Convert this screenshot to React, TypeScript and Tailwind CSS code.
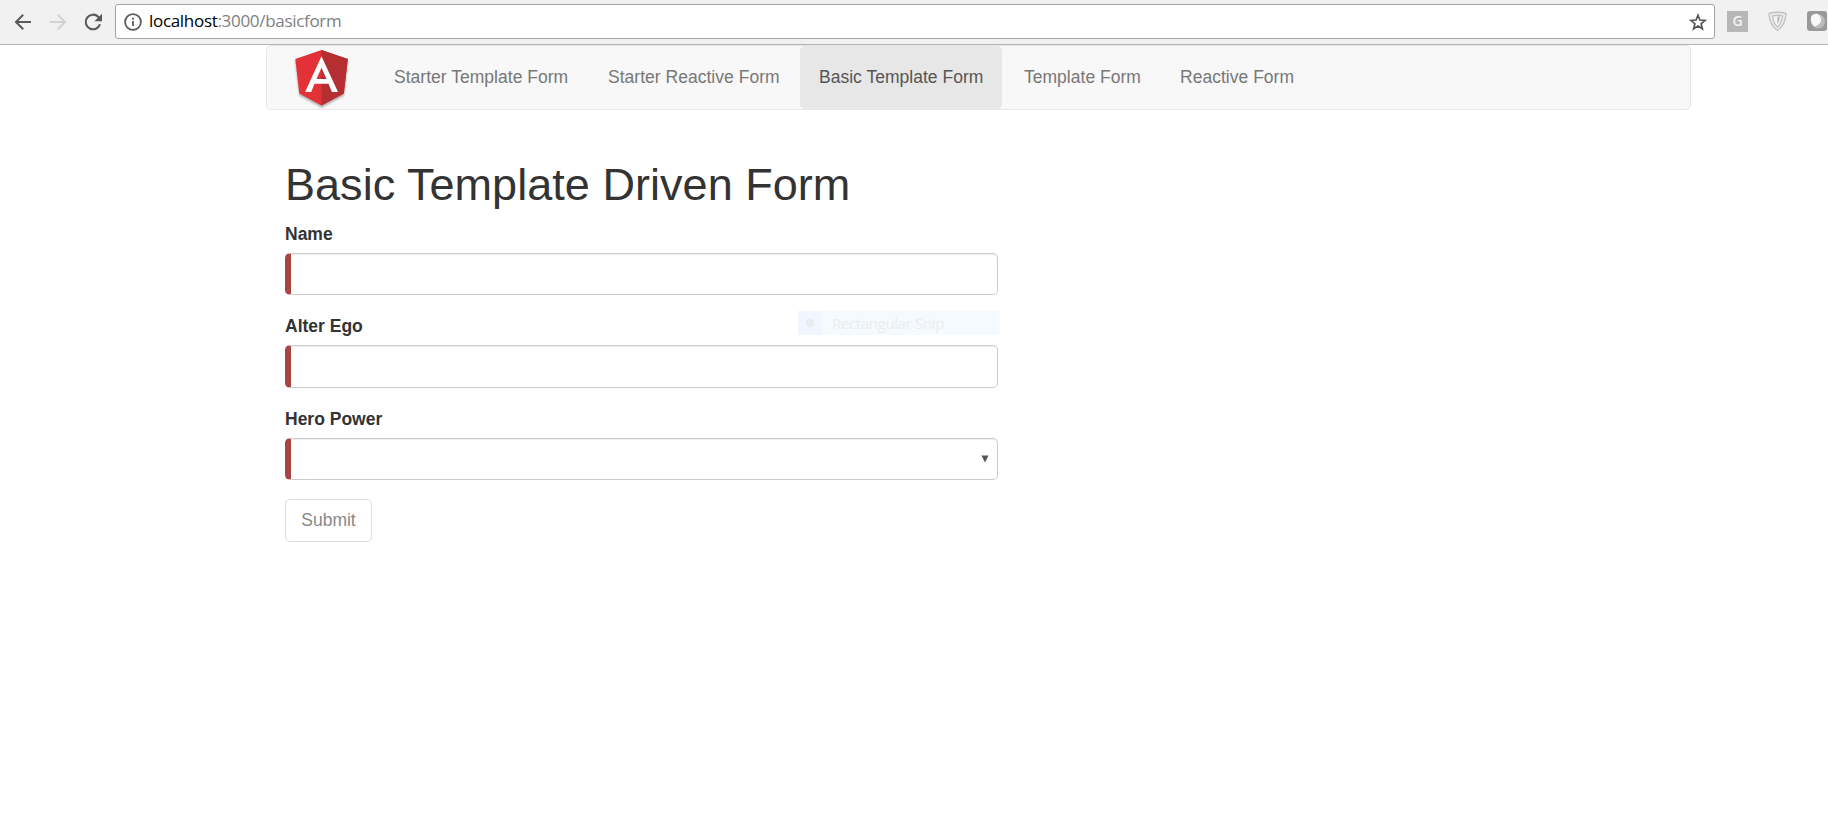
import React from 'react';

function Toolbar() {
  return (
    <header className="flex h-[45px] items-start overflow-hidden border-b border-[#b3b3b3] bg-[#f1f1f1]">
      <svg className="mt-[11px] ml-[12px] size-[22px] shrink-0" viewBox="0 0 22 22" fill="none" stroke="#5a5a5a" strokeWidth="2">
        <path d="M19 11H4.5M11.2 3.8 4 11l7.2 7.2" />
      </svg>
      <svg className="mt-[11px] ml-[13px] size-[22px] shrink-0" viewBox="0 0 22 22" fill="none" stroke="#d2d2d2" strokeWidth="2">
        <path d="M3 11h14.5M10.8 3.8 18 11l-7.2 7.2" />
      </svg>
      <svg className="mt-[11px] ml-[13px] size-[22px] shrink-0" viewBox="0 0 22 22" fill="none" stroke="#5a5a5a" strokeWidth="2.1">
        <path d="M18 13.2A7.3 7.3 0 1 1 16.2 5.8l1.2 1.2" />
        <path d="M20 2.8v7.4h-7.6z" fill="#5a5a5a" stroke="none" />
      </svg>
      <div className="mt-[4px] ml-[11px] flex h-[35px] w-[1600px] shrink-0 items-center rounded-[3px] border border-[#a3a3a3] bg-white pr-[7px] pl-[8px]">
        <svg className="size-[18px]" viewBox="0 0 18 18" fill="none" stroke="#5a5a5a" strokeWidth="1.8">
          <circle cx="9" cy="9" r="7.9" />
          <path d="M9 8v5M9 4.8v1.9" />
        </svg>
        <span className="mt-[-1px] ml-[7px] flex-1 font-['Open_Sans',sans-serif] text-[17px] leading-[24px] tracking-[-0.31px] whitespace-nowrap text-[#808080]">
          <span className="text-black">localhost</span>:3000/basicform
        </span>
        <svg className="size-[18px]" viewBox="0 0 18 18" fill="none" stroke="#555" strokeWidth="1.7">
          <path d="m9 2.2 1.9 4.8 5.2.4-4 3.3 1.3 5.1L9 13l-4.4 2.8 1.3-5.1-4-3.3 5.2-.4z" />
        </svg>
      </div>
      <svg className="mt-[11px] ml-[12px] h-[21px] w-[21px] shrink-0" viewBox="0 0 21 21">
        <path d="M0 0h21v21H0z" fill="#b7b7b7" />
        <text x="10.5" y="15.4" textAnchor="middle" fontFamily="Open Sans, sans-serif" fontSize="14" fontWeight="600" fill="#f4f4f4">G</text>
      </svg>
      <svg className="mt-[11px] ml-[20px] h-[21px] w-[19px] shrink-0" viewBox="0 0 19 21" fill="none" stroke="#c2c2c2" strokeWidth="1.4">
        <path d="M1 2.5Q9.5 0 18 2.5 17.500 14 9.500 19.500 1.500 14 1 2.500Z" fill="#ededed" />
        <path d="M4.500 5Q9.500 3.500 14.500 5q-.5 7-5 11Q5 12 4.500 5Z" fill="#f4f4f4" />
        <path d="M9.300 5.500v8q2.500-3 2.600-8Z" fill="#b9b9b9" stroke="none" />
      </svg>
      <svg className="mt-[11px] ml-[20px] h-[20px] w-[20px] shrink-0" viewBox="0 0 20 20">
        <rect width="20" height="20" rx="3" fill="#999" />
        <ellipse cx="11" cy="10.500" rx="7" ry="7" fill="#bcbcbc" />
        <path d="M4 6q2-4 7-3 5 4 2 9-3 4-6 3-4-3-3-9Z" fill="#f8f8f8" />
      </svg>
    </header>
  );
}

function AngularLogo() {
  return (
    <svg className="h-[62px] w-[60px] shrink-0 overflow-visible drop-shadow-[0_2px_1px_rgba(0,0,0,0.3)]" viewBox="-0.5 0 60 62">
      <path d="m30 4 26.300 9-4 34.500L30 59.500l-22.200-12L3.800 13Z" fill="#e23237" />
      <path d="m30 4 26.300 9-4 34.500L30 59.500Z" fill="#b52e31" />
      <path fillRule="evenodd" fill="#fff" d="M30 10.200 46.500 46H40.400L37 37.700H23L19.700 46H13.600ZM30 21.700 25 33h10Z" />
    </svg>
  );
}

const links = [
  { label: 'Starter Template Form', box: 'w-[214px]' },
  { label: 'Starter Reactive Form', box: 'w-[211px]' },
  { label: 'Basic Template Form', box: 'w-[202px] mr-[3px] rounded-[5px] bg-[#e7e7e7] text-[#555]' },
  { label: 'Template Form', box: 'w-[156px]' },
  { label: 'Reactive Form', box: 'w-[152px]' },
];

function Field({ label, gap, height, select }: { label: string; gap: string; height: string; select?: boolean }) {
  return (
    <div className={gap}>
      <label className="block h-[25px] text-[17.5px] leading-[25px] font-bold">{label}</label>
      <div
        className={`mt-[6px] flex items-center justify-end rounded-[5px] border border-l-[6px] border-[#ccc] border-l-[#a94442] bg-white shadow-[inset_0_1px_1px_rgba(0,0,0,0.075)] ${height}`}
      >
        {select && (
          <svg className="mr-[8px] size-[8px]" viewBox="0 0 8 8">
            <path d="M.5.500h7L4 7.500Z" fill="#555" />
          </svg>
        )}
      </div>
    </div>
  );
}

export default function App() {
  return (
    <div className="relative h-[825px] w-[1828px] overflow-hidden bg-white font-['Liberation_Sans',Arial,sans-serif] text-[#333]">
      <Toolbar />
      <nav className="ml-[266px] flex h-[65px] w-[1425px] rounded-[5px] border border-[#e7e7e7] bg-[#f8f8f8] pl-[24px]">
        <AngularLogo />
        <div className="ml-[24px] flex text-[17.5px] leading-[25px] tracking-[0.02px] text-[#777]">
          {links.map((l) => (
            <a key={l.label} className={`h-[63px] shrink-0 pt-[19px] pl-[19px] whitespace-nowrap ${l.box}`}>
              {l.label}
            </a>
          ))}
        </div>
      </nav>
      <main className="ml-[285px] w-[713px] pt-[50px]">
        <h1 className="h-[50px] text-[45px] leading-[50px] font-normal tracking-[0.04px] whitespace-nowrap">Basic Template Driven Form</h1>
        <Field label="Name" gap="mt-[12px]" height="h-[42px]" />
        <Field label="Alter Ego" gap="mt-[19px]" height="h-[43px]" />
        <Field label="Hero Power" gap="mt-[19px]" height="h-[42px]" select />
        <button className="mt-[19px] h-[43px] w-[87px] rounded-[5px] border border-[#ddd] bg-white text-[17.5px] leading-[25px] text-[#888]">
          Submit
        </button>
      </main>
      <div className="absolute top-[311px] left-[798px] flex h-[24px] w-[202px] items-center bg-[#f5fafe]">
        <div className="flex h-full w-[24px] items-center justify-center bg-[#eff6ff]">
          <span className="size-[8px] rounded-full bg-[#e9ebef]" />
        </div>
        <span className="ml-[10px] font-['Open_Sans',sans-serif] text-[15px] leading-[24px] tracking-[-0.35px] whitespace-nowrap text-[#eaecee]">
          Rectangular Snip
        </span>
      </div>
    </div>
  );
}
